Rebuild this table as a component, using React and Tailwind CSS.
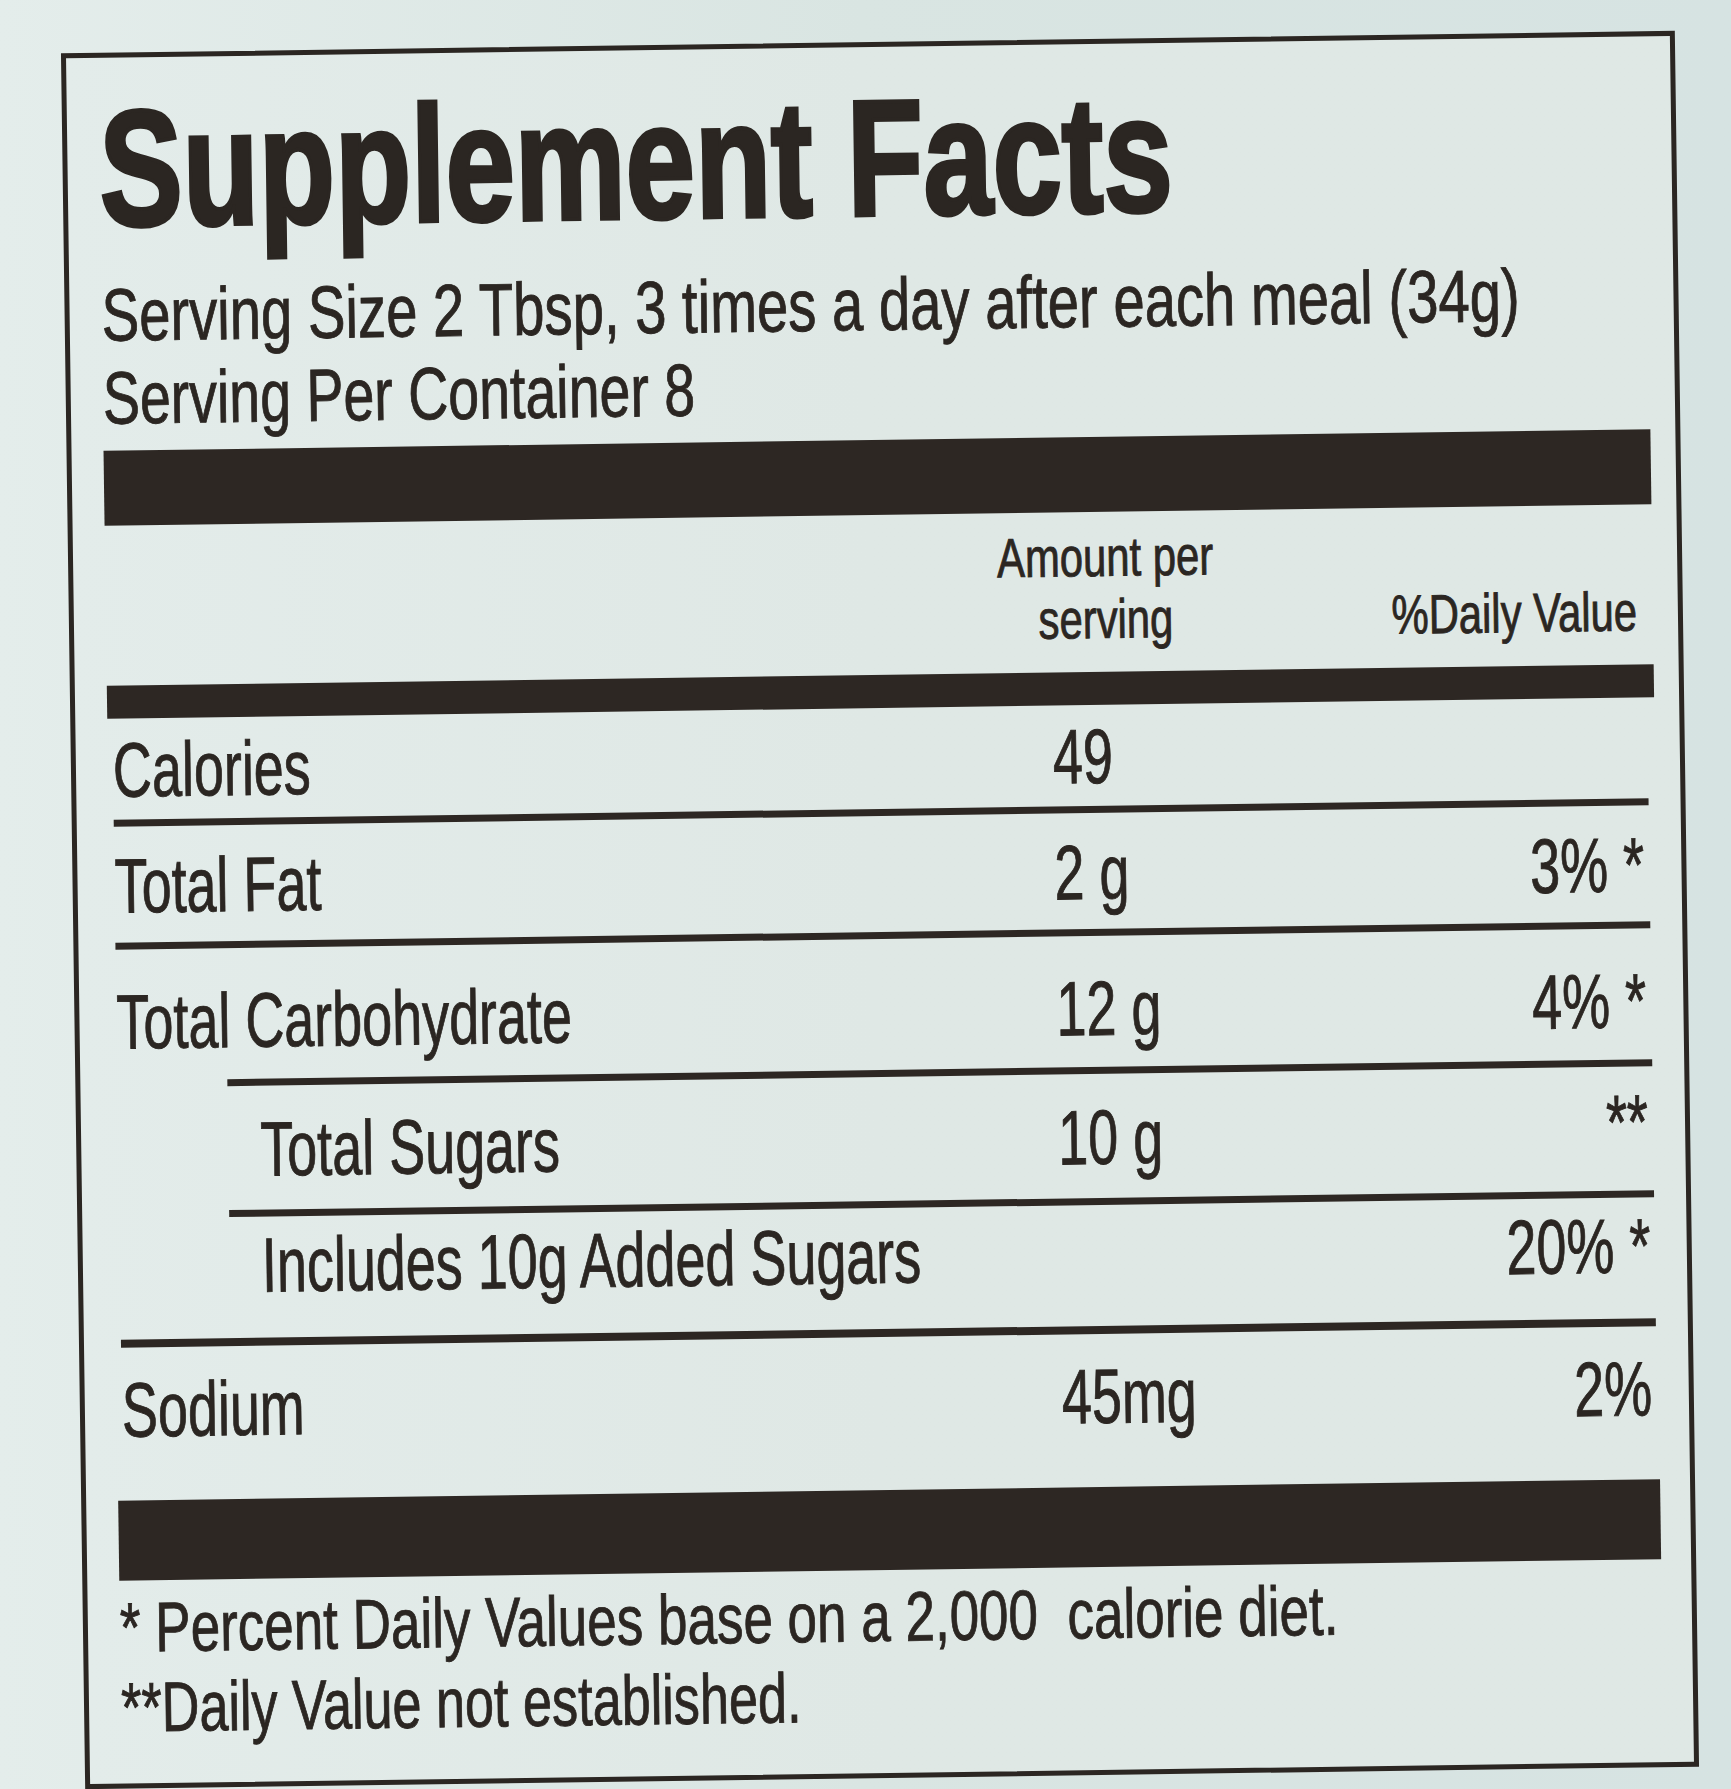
import React from "react";

const Line = ({ className = "" }) => (
  <div className={"h-[7px] bg-[#2d2723] " + className} />
);

const Row = ({ label, amount, dv, indent, pad, raised }) => (
  <div className={"flex items-baseline text-[77px] leading-none " + pad}>
    <div className={"w-[940px] shrink-0 whitespace-nowrap " + (indent ? "pl-[142px]" : "")}>
      <span className="inline-block origin-left scale-x-[0.7]">{label}</span>
    </div>
    <div className="flex-1 whitespace-nowrap">
      {amount && <span className="inline-block origin-left scale-x-[0.7]">{amount}</span>}
    </div>
    <div className="pr-[5px] text-right whitespace-nowrap">
      {dv && (
        <span
          className={
            "inline-block origin-right scale-x-[0.7] " +
            (raised ? "-translate-y-[8px]" : "")
          }
        >
          {dv}
        </span>
      )}
    </div>
  </div>
);

export default function App() {
  return (
    <div className="w-[1731px] h-[1789px] overflow-hidden bg-linear-to-r from-[#e4edeb] via-[#d9e5e2] to-[#d6e3e2] pt-[42px] pl-[73px] font-['Liberation_Sans',Arial,sans-serif] text-[#2b2622]">
      <div className="w-[1614px] h-[1736px] rotate-[-0.8deg] border-[5px] border-[#2b2622] bg-linear-to-r from-[#e3ecea] via-[#dfe8e5] to-[#dfe8e5] pt-[29px] pl-[32px] pr-[25px] [-webkit-text-stroke:0.9px_#2b2622]">
        {/* heading */}
        <h1 className="text-[165px] font-bold leading-none whitespace-nowrap [-webkit-text-stroke:4px_#2b2622]">
          <span className="inline-block origin-left scale-x-[0.755]">Supplement Facts</span>
        </h1>

        <div className="mt-[22px] text-[74px] leading-[83px] whitespace-nowrap">
          <span className="block origin-left scale-x-[0.76]">
            Serving Size 2 Tbsp, 3 times a day after each meal (34g)
          </span>
          <span className="block origin-left scale-x-[0.75]">Serving Per Container 8</span>
        </div>

        <div className="mt-[11px] h-[75px] bg-[#2d2723]" />

        {/* column heads */}
        <div className="flex items-end pt-[14px] text-[55px] leading-[62px] whitespace-nowrap">
          <div className="w-[850px] shrink-0" />
          <div className="w-[300px] shrink-0 text-center">
            <span className="block origin-center scale-x-[0.76]">Amount per</span>
            <span className="block origin-center scale-x-[0.76]">serving</span>
          </div>
          <div className="flex-1 pr-[16px] text-right">
            <span className="inline-block origin-right scale-x-[0.76]">%Daily Value</span>
          </div>
        </div>

        <div className="mt-[22px] h-[33px] bg-[#2d2723]" />

        {/* nutrient rows */}
        <div className="pl-[5px] pr-[7px]">
          <Row label="Calories" amount="49" pad="pt-[13px]" />
          <Line className="mt-[11px]" />
          <Row label="Total Fat" amount="2 g" dv="3% *" pad="pt-[21px]" />
          <Line className="mt-[18px]" />
          <Row label="Total Carbohydrate" amount="12 g" dv="4% *" pad="pt-[34px]" />
          <Line className="mt-[20px] ml-[110px]" />
          <Row label="Total Sugars" amount="10 g" dv="**" indent raised pad="pt-[25px]" />
          <Line className="mt-[22px] ml-[110px]" />
          <Row label="Includes 10g Added Sugars" dv="20% *" indent pad="pt-[10px]" />
          <Line className="mt-[34px] h-[8px]" />
          <Row label="Sodium" amount="45mg" dv="2%" pad="pt-[24px]" />
        </div>

        <div className="mt-[52px] mr-[5px] h-[80px] bg-[#2d2723]" />

        {/* footnotes */}
        <div className="mt-[7px] text-[70px] leading-[80px] whitespace-pre">
          <span className="block origin-left scale-x-[0.757]">
            {"* Percent Daily Values base on a 2,000  calorie diet."}
          </span>
          <span className="block origin-left scale-x-[0.745]">**Daily Value not established.</span>
        </div>
      </div>
    </div>
  );
}
